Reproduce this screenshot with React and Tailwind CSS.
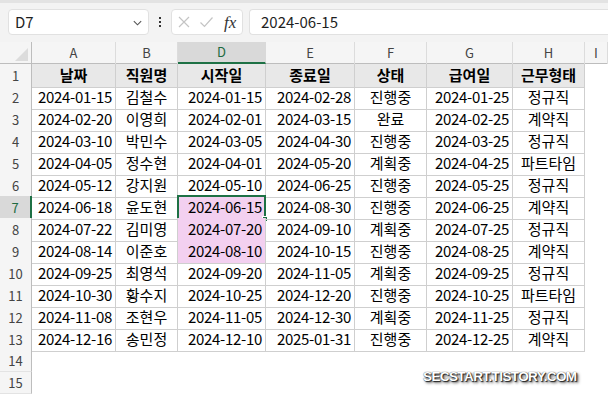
const rows = [
  ["2024-01-15", "김철수", "2024-01-15", "2024-02-28", "진행중", "2024-01-25", "정규직"],
  ["2024-02-20", "이영희", "2024-02-01", "2024-03-15", "완료", "2024-02-25", "계약직"],
  ["2024-03-10", "박민수", "2024-03-05", "2024-04-30", "진행중", "2024-03-25", "정규직"],
  ["2024-04-05", "정수현", "2024-04-01", "2024-05-20", "계획중", "2024-04-25", "파트타임"],
  ["2024-05-12", "강지원", "2024-05-10", "2024-06-25", "진행중", "2024-05-25", "정규직"],
  ["2024-06-18", "윤도현", "2024-06-15", "2024-08-30", "진행중", "2024-06-25", "계약직"],
  ["2024-07-22", "김미영", "2024-07-20", "2024-09-10", "계획중", "2024-07-25", "정규직"],
  ["2024-08-14", "이준호", "2024-08-10", "2024-10-15", "진행중", "2024-08-25", "계약직"],
  ["2024-09-25", "최영석", "2024-09-20", "2024-11-05", "계획중", "2024-09-25", "정규직"],
  ["2024-10-30", "황수지", "2024-10-25", "2024-12-20", "진행중", "2024-10-25", "파트타임"],
  ["2024-11-08", "조현우", "2024-11-05", "2024-12-30", "계획중", "2024-11-25", "정규직"],
  ["2024-12-16", "송민정", "2024-12-10", "2025-01-31", "진행중", "2024-12-25", "계약직"],
];

const heads = ["날짜", "직원명", "시작일", "종료일", "상태", "급여일", "근무형태"];
const letters = ["A", "B", "D", "E", "F", "G", "H", "I"];
// date columns are right aligned, text columns centered
const align = [
  "justify-end pr-[3px] tracking-[-0.3px]",
  "justify-center",
  "justify-end pr-[3px] tracking-[-0.3px]",
  "justify-end pr-[3px] tracking-[-0.3px]",
  "justify-center",
  "justify-end pr-[3px] tracking-[-0.3px]",
  "justify-center",
];
const cols = "grid grid-cols-[32px_84px_62px_88px_89px_72px_86px_72px_1fr]";

const Toolbar = () => (
  <div className="h-[42px] bg-[#f3f3f3]">
    <div className="h-[3px] bg-[#e3e3e3]" />
    <div className="flex items-center pl-[8px] pt-[6px]">
      <div className="flex h-[26px] w-[141px] items-center justify-between rounded-[4px] border border-[#e1e1e1] bg-white pl-[6px] pr-[5px]">
        <span className="text-[15px] text-[#1f1f1f]">D7</span>
        <svg width="11" height="11" viewBox="0 0 12 12" fill="none" stroke="#555" strokeWidth="1.2">
          <path d="M2 4.5l4 4 4-4" />
        </svg>
      </div>
      <div className="flex w-[22px] flex-col items-center gap-[2px]">
        <span className="h-[2px] w-[2px] bg-[#333]" />
        <span className="h-[2px] w-[2px] bg-[#333]" />
        <span className="h-[2px] w-[2px] bg-[#333]" />
      </div>
      <div className="flex h-[26px] w-[72px] items-center rounded-[4px] border border-[#e1e1e1] bg-white pl-[5px]">
        <svg width="14" height="14" viewBox="0 0 14 14" stroke="#c4c4c4" strokeWidth="1.2">
          <path d="M2 2l10 10M12 2L2 12" />
        </svg>
        <svg className="ml-[8px]" width="15" height="14" viewBox="0 0 15 14" fill="none" stroke="#c4c4c4" strokeWidth="1.2">
          <path d="M1.5 7.5l4 4 8-9" />
        </svg>
        <span className="ml-[10px] font-['Liberation_Serif',serif] text-[17px] italic leading-none text-[#333]">fx</span>
      </div>
      <div className="ml-[6px] flex h-[26px] flex-1 items-center rounded-l-[4px] border border-r-0 border-[#e1e1e1] bg-white pl-[11px]">
        <span className="text-[15px] text-[#1f1f1f]">2024-06-15</span>
      </div>
    </div>
  </div>
);

const ColHeader = () => (
  <div className={`${cols} h-[22px] border-b border-[#bdbdbd] bg-[#f5f5f5] text-[13px] text-[#444]`}>
    <div className="relative border-r border-[#bdbdbd]">
      <svg className="absolute bottom-[3px] right-[3px]" width="13" height="13" viewBox="0 0 13 13">
        <path d="M13 0V13H0Z" fill="#dcdcdc" />
      </svg>
    </div>
    {letters.map((l) =>
      l === "D" ? (
        <div key={l} className="flex items-center justify-center border-b-2 border-r border-b-[#1e7145] border-r-[#d9d9d9] bg-[#d9d9d9] text-[#1e6b42]">
          {l}
        </div>
      ) : (
        <div key={l} className="flex items-center justify-center border-r border-[#dcdcdc]">
          {l}
        </div>
      )
    )}
  </div>
);

const RowNum = ({ n }) =>
  n === 7 ? (
    <div className="flex items-center justify-center border-b border-r-2 border-b-[#dcdcdc] border-r-[#1e7145] bg-[#d9d9d9] text-[13px] text-[#1e6b42]">
      {n}
    </div>
  ) : (
    <div className="flex items-center justify-center border-b border-r border-b-[#e3e3e3] border-r-[#bdbdbd] bg-[#f5f5f5] text-[13px] text-[#444]">
      {n}
    </div>
  );

export default function App() {
  return (
    <div className="relative h-[395px] w-[608px] overflow-hidden bg-white font-['Noto_Sans_CJK_KR','Noto_Sans',sans-serif] text-[15px] text-black">
      <Toolbar />
      <ColHeader />
      <div className={`${cols} h-[22px]`}>
        <RowNum n={1} />
        {heads.map((h) => (
          <div key={h} className="flex items-center justify-center border-b border-r border-[#cfcfcf] bg-[#e8e8e8] font-bold">
            {h}
          </div>
        ))}
        <div />
      </div>
      {rows.map((r, i) => {
        const n = i + 2;
        return (
          <div key={n} className={`${cols} h-[22px]`}>
            <RowNum n={n} />
            {r.map((v, j) => {
              const pink = j === 2 && n >= 7 && n <= 9;
              return (
                <div key={j} className={`relative flex items-center border-b border-r border-[#cfcfcf] ${align[j]} ${pink ? "bg-[#f3d0f0]" : ""}`}>
                  {v}
                  {j === 2 && n === 7 && (
                    <div className="absolute -left-[1px] -top-[1px] bottom-[-1px] right-[-1px] border-2 border-[#1e7145]">
                      <div className="absolute -bottom-[4px] -right-[4px] h-[6px] w-[6px] border border-white bg-[#1e7145]" />
                    </div>
                  )}
                </div>
              );
            })}
            <div />
          </div>
        );
      })}
      {[14, 15].map((n) => (
        <div key={n} className={`${cols} h-[22px]`}>
          <RowNum n={n} />
        </div>
      ))}
      <div className="absolute left-[423px] top-[367px] font-['Liberation_Sans',sans-serif] text-[13.5px] font-bold tracking-[-0.6px] text-white [text-shadow:0_0_1px_#222,1px_1px_1px_#222,2px_2px_3px_#555]">
        SECSTART.TISTORY.COM
      </div>
    </div>
  );
}
